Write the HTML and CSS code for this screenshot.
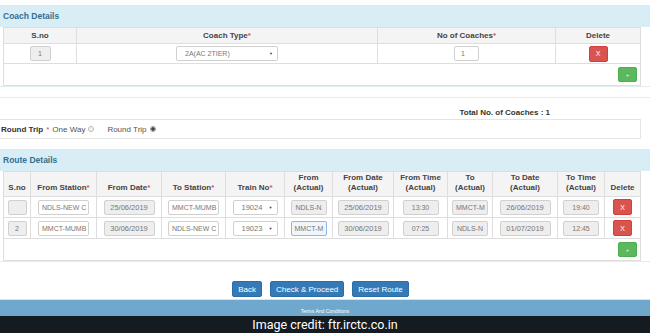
FILE: index.html
```html
<!DOCTYPE html>
<html lang="en">
<head>
    <meta charset="UTF-8">
    <meta name="viewport" content="width=device-width, initial-scale=1.0">
    <title>Coach and Route Details</title>
    <link rel="stylesheet" href="styles.css">
</head>
<body>
    <div class="page">
        <div class="panel">
            <div class="panel-heading">Coach Details</div>
            <div class="panel-body">
                <table class="grid coach-grid">
                    <colgroup>
                        <col style="width:73px"><col style="width:301px"><col style="width:178px"><col style="width:85px">
                    </colgroup>
                    <tr class="head">
                        <th>S.no</th>
                        <th>Coach Type<span class="req">*</span></th>
                        <th>No of Coaches<span class="req">*</span></th>
                        <th>Delete</th>
                    </tr>
                    <tr class="row">
                        <td><span class="field sno">1</span></td>
                        <td><span class="field select coach-type">2A(AC 2TIER)<span class="caret">&#9660;</span></span></td>
                        <td><span class="field white count">1</span></td>
                        <td><button class="btn-del">X</button></td>
                    </tr>
                    <tr class="add-row">
                        <td colspan="4"><button class="btn-add">+</button></td>
                    </tr>
                </table>
            </div>
        </div>

        <div class="totals">Total No. of Coaches : 1</div>

        <div class="trip">
            <b>Round Trip</b> <span class="req">*</span>
            <span class="opt">One Way <span class="radio"></span></span>
            <span class="opt">Round Trip <span class="radio checked"></span></span>
        </div>

        <div class="panel">
            <div class="panel-heading">Route Details</div>
            <div class="panel-body">
                <table class="grid route-grid">
                    <colgroup>
                        <col style="width:27px"><col style="width:66px"><col style="width:65px"><col style="width:64px">
                        <col style="width:59px"><col style="width:48px"><col style="width:61px"><col style="width:54px">
                        <col style="width:45px"><col style="width:65px"><col style="width:47px"><col style="width:36px">
                    </colgroup>
                    <tr class="head">
                        <th>S.no</th>
                        <th>From Station<span class="req">*</span></th>
                        <th>From Date<span class="req">*</span></th>
                        <th>To Station<span class="req">*</span></th>
                        <th>Train No<span class="req">*</span></th>
                        <th>From<br>(Actual)</th>
                        <th>From Date<br>(Actual)</th>
                        <th>From Time<br>(Actual)</th>
                        <th>To<br>(Actual)</th>
                        <th>To Date<br>(Actual)</th>
                        <th>To Time<br>(Actual)</th>
                        <th>Delete</th>
                    </tr>
                    <tr class="row">
                        <td><span class="field rsno"></span></td>
                        <td><span class="field white station">NDLS-NEW C</span></td>
                        <td><span class="field date">25/06/2019</span></td>
                        <td><span class="field white station">MMCT-MUMB</span></td>
                        <td><span class="field white select train">19024<span class="caret">&#9660;</span></span></td>
                        <td><span class="field short">NDLS-N</span></td>
                        <td><span class="field date">25/06/2019</span></td>
                        <td><span class="field short">13:30</span></td>
                        <td><span class="field short">MMCT-M</span></td>
                        <td><span class="field date">26/06/2019</span></td>
                        <td><span class="field short">19:40</span></td>
                        <td><button class="btn-del">X</button></td>
                    </tr>
                    <tr class="row">
                        <td><span class="field rsno">2</span></td>
                        <td><span class="field white station">MMCT-MUMB</span></td>
                        <td><span class="field date">30/06/2019</span></td>
                        <td><span class="field white station">NDLS-NEW C</span></td>
                        <td><span class="field white select train">19023<span class="caret">&#9660;</span></span></td>
                        <td><span class="field short focus">MMCT-M</span></td>
                        <td><span class="field date">30/06/2019</span></td>
                        <td><span class="field short">07:25</span></td>
                        <td><span class="field short">NDLS-N</span></td>
                        <td><span class="field date">01/07/2019</span></td>
                        <td><span class="field short">12:45</span></td>
                        <td><button class="btn-del">X</button></td>
                    </tr>
                    <tr class="add-row">
                        <td colspan="12"><button class="btn-add">+</button></td>
                    </tr>
                </table>
            </div>
        </div>

        <div class="actions">
            <button class="btn">Back</button>
            <button class="btn">Check &amp; Proceed</button>
            <button class="btn">Reset Route</button>
        </div>

        <div class="terms">Terms And Conditions</div>
        <div class="credit">Image credit: ftr.irctc.co.in</div>
    </div>
</body>
</html>
```

FILE: styles.css
```css
* {
    box-sizing: border-box;
}
body {
    margin: 0;
    font-family: "Liberation Sans", Arial, sans-serif;
    font-size: 8px;
    color: #333;
    background: #fff;
    width: 650px;
    height: 333px;
    overflow: hidden;
}
.page {
    padding-top: 5px;
}
.panel-heading {
    height: 22px;
    line-height: 22px;
    padding-left: 3px;
    background: #d9edf7;
    color: #31708f;
    font-weight: bold;
    font-size: 8.5px;
}
.panel-body {
    padding-left: 3px;
    border-bottom: 1px solid #e2eeee;
}
.grid {
    width: 637px;
    table-layout: fixed;
    border-collapse: collapse;
}
.grid th,
.grid td {
    border: 1px solid #dedede;
    padding: 0;
    text-align: center;
    vertical-align: middle;
}
.grid th {
    background: #f4f4f4;
    font-weight: bold;
    color: #444;
}
.coach-grid .head {
    height: 16px;
}
.route-grid .head {
    height: 25px;
}
.route-grid th {
    vertical-align: bottom;
    line-height: 10px;
    padding-bottom: 3px;
}
.coach-grid .row {
    height: 20px;
}
.route-grid .row {
    height: 21px;
}
.add-row {
    height: 22px;
}
.grid .add-row td {
    text-align: right;
    padding-right: 3px;
}
.req {
    color: #d9534f;
}
.field {
    display: inline-block;
    height: 15px;
    line-height: 13px;
    border: 1px solid #d0d0d0;
    border-radius: 2px;
    background: #eee;
    color: #777;
    font-size: 7px;
    padding: 0 3px;
    text-align: left;
    white-space: nowrap;
    overflow: hidden;
    vertical-align: middle;
}
.field.white {
    background: #fff;
}
.field.focus {
    background: #eef5fb;
    border-color: #8bb8dd;
}
.select {
    display: inline-flex;
    justify-content: space-between;
    align-items: center;
}
.sno {
    width: 21px;
    text-align: center;
}
.coach-type {
    width: 102px;
    background: #fff;
    padding: 0 4px 0 8px;
}
.count {
    width: 25px;
    padding-left: 6px;
}
.rsno {
    width: 19px;
    text-align: center;
}
.station {
    width: 51px;
    text-align: center;
}
.date {
    width: 51px;
    font-size: 7.5px;
    text-align: center;
}
.train {
    width: 45px;
    padding: 0 4px 0 8px;
    font-size: 7.5px;
}
.short {
    width: 36px;
    text-align: center;
}
.caret {
    font-size: 4px;
    color: #444;
}
.btn-del {
    width: 19px;
    height: 16px;
    padding: 0;
    border: 1px solid #d43f3a;
    border-radius: 2px;
    background: #d9534f;
    color: #fff;
    font-family: "Liberation Sans", Arial, sans-serif;
    font-size: 7px;
    vertical-align: middle;
}
.btn-add {
    width: 19px;
    height: 15px;
    padding: 0;
    border: 1px solid #4cae4c;
    border-radius: 2px;
    background: #5cb85c;
    color: #e8f6e8;
    font-family: "Liberation Sans", Arial, sans-serif;
    font-size: 6px;
    vertical-align: middle;
}
.totals {
    margin-top: 10px;
    height: 22px;
    border-top: 1px solid #e2eeee;
    padding-top: 10px;
    padding-right: 100px;
    text-align: right;
    font-weight: bold;
    line-height: 10px;
}
.trip {
    width: 641px;
    height: 20px;
    border: 1px solid #e4e4e4;
    border-left: none;
    display: flex;
    align-items: center;
    gap: 3px;
    padding-left: 1px;
    margin-bottom: 10px;
}
.trip .opt {
    color: #555;
    margin-right: 10px;
    display: flex;
    align-items: center;
    gap: 3px;
}
.radio {
    display: inline-block;
    width: 6px;
    height: 6px;
    border: 1px solid #bbb;
    border-radius: 50%;
    background: #f4f4f4;
}
.radio.checked {
    background: radial-gradient(circle, #444 0 1.5px, #f4f4f4 2px);
    border-color: #999;
}
.actions {
    display: flex;
    justify-content: center;
    gap: 8px;
    padding: 19px 9px 0 0;
    height: 37px;
}
.btn {
    height: 16px;
    padding: 0 5px;
    border: 1px solid #2e6da4;
    border-radius: 2px;
    background: #337ab7;
    color: #fff;
    font-family: "Liberation Sans", Arial, sans-serif;
    font-size: 8px;
}
.terms {
    height: 17px;
    border-top: 1px solid #d6e6ef;
    background: #6fa8cc;
    color: #fff;
    text-align: center;
    font-size: 5px;
    padding-top: 8px;
    line-height: 6px;
}
.credit {
    height: 20px;
    background: #141b21;
    color: #fff;
    text-align: center;
    font-family: Roboto, "Liberation Sans", sans-serif;
    font-size: 12.5px;
    line-height: 18px;
}
```
